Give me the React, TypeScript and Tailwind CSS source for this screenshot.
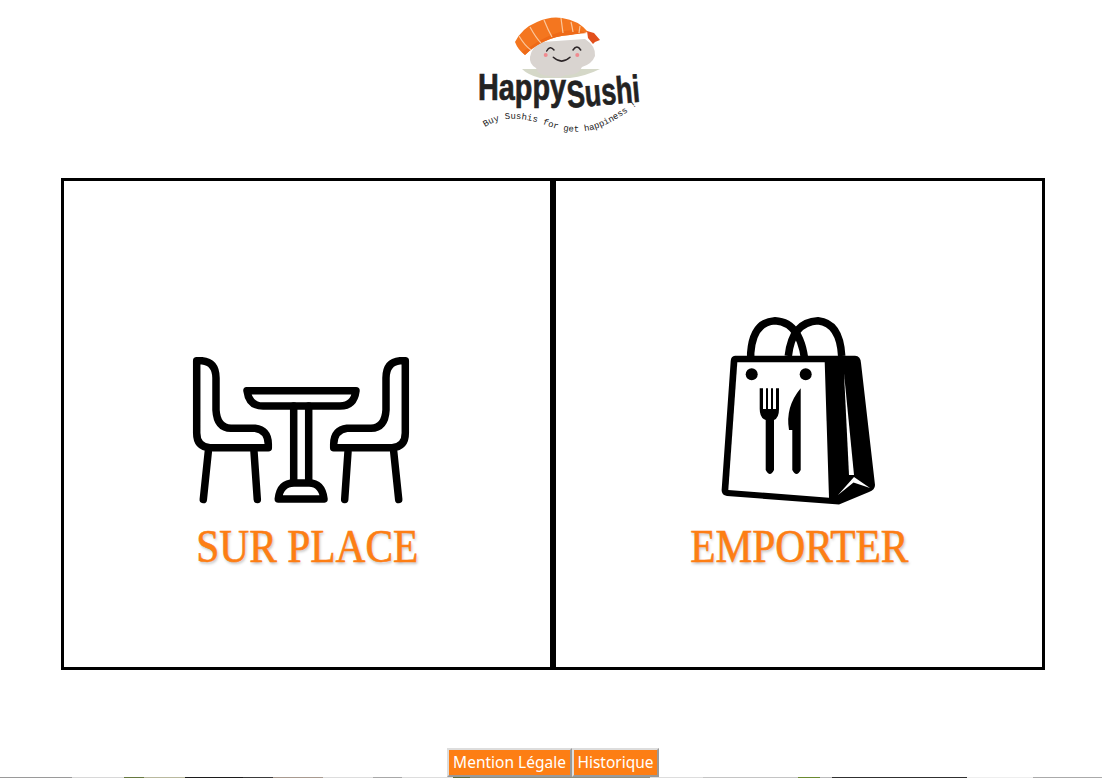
import type { ReactNode } from "react";

// logo: the sushi is drawn, the wordmark stays real text
function Logo() {
  return (
    <svg width="180" height="140" viewBox="0 0 180 140">
      <path d="M52 69 L130 69 Q116 76 100 78 L70 78 Q58 75 52 69Z" fill="#d5d8c8" />
      <path d="M60 57 Q62 46 72 42 L115 39 Q126 46 125 56 Q122 64 112 67 Q108 76 96 75 Q88 79 80 76 Q68 76 66 68 Q59 64 60 57Z" fill="#d9d4d0" />
      <path d="M45 42 Q52 28 67 22 Q80 16 92 18 Q108 20 118 32 Q108 33 100 35 Q85 36 73 42 Q63 47 55 55 Q48 50 45 42Z" fill="#f4761f" />
      <path d="M60 47 Q73 37 90 32 Q105 28 117 33 Q106 34 100 35 Q85 36 73 42 Q63 47 55 55 L52 52Z" fill="#ee6a18" />
      <path d="M117 31 L124 33 L130 40 L125 42 L123 44 L118 38Z" fill="#e2501c" />
      <g stroke="#fbc79c" strokeWidth="1.2" fill="none">
        <path d="M49 36 Q55 46 61 50" />
        <path d="M60 27 Q66 38 71 43" />
        <path d="M74 20 Q78 30 82 37" />
        <path d="M91 18 Q92 26 93 33" />
        <path d="M101 22 Q102 26 103 32" />
        <path d="M110 26 L109 33" />
      </g>
      <g stroke="#2b2426" strokeWidth="1.5" fill="none" strokeLinecap="round">
        <path d="M76.7 51 Q80 45 84 50" />
        <path d="M103 50 Q107 44 110.7 50" />
        <path d="M83.3 57.3 Q91.7 65 100 57.3" />
      </g>
      <circle cx="75.7" cy="55" r="2" fill="#f08a8f" />
      <circle cx="107.3" cy="55" r="2" fill="#f08a8f" />
      <text x="8" y="100" fontFamily="Liberation Sans, sans-serif" fontWeight="700" fontSize="36" fill="#222" stroke="#222" strokeWidth="0.7" textLength="88" lengthAdjust="spacingAndGlyphs">Happy</text>
      <text x="98" y="108" fontFamily="Liberation Sans, sans-serif" fontWeight="700" fontSize="38" fill="#222" stroke="#222" strokeWidth="0.7" textLength="73" lengthAdjust="spacingAndGlyphs" transform="rotate(-5 98 108)">Sushi</text>
      <path id="tagline" d="M15 127 C30 117 50 116 75 125 C95 133 115 135 135 125 C148 119 160 111 178 96" fill="none" />
      <text fontFamily="Liberation Mono, monospace" fontSize="9" fill="#222">
        <textPath href="#tagline">Buy Sushis for get happiness !</textPath>
      </text>
    </svg>
  );
}

function Chair() {
  return (
    <>
      <path d="M6.7 12.7 L12 12.7 Q26 14 26 30 L26 62 Q27 80 41 80.3 L65 80.3 Q78 82 78.3 96 L78.3 99.7 L20 99.7 Q6.7 99 6.7 85Z" />
      <path d="M18.3 103.7 L13.3 151.5" />
      <path d="M64 103.7 L67.3 151.5" />
    </>
  );
}

function TableIcon() {
  return (
    <svg className="mb-[6px] mr-[12px]" width="222" height="158" viewBox="0 0 222 158" fill="none" stroke="#000" strokeWidth="7.5" strokeLinecap="round" strokeLinejoin="round">
      <Chair />
      <g transform="translate(222 0) scale(-1 1)">
        <Chair />
      </g>
      <path d="M57 42.7 L166 42.7 Q164 58 150 58 L73 58 Q59 58 57 42.7Z" />
      <path d="M103.7 58 L103.7 134 M118.7 58 L118.7 134" />
      <path d="M88.3 151 Q90 135 104 135 L119 135 Q132 135 134 151Z" />
    </svg>
  );
}

function BagIcon() {
  return (
    <svg width="160" height="197" viewBox="0 0 160 197" fill="none">
      <g stroke="#000" strokeWidth="7.5" fill="none">
        <path d="M31.7 55 L31.7 38 Q34 7 56 5.7 Q84 7 86.7 55" />
        <path d="M69.3 41 Q73 7 99 5.7 Q121 8 122.7 41" />
      </g>
      <path d="M16 40.7 L136 40.7 Q141.7 41 142 48 L156 170 Q156 175 150 177 L120 189.5 L8 181 Q2 180 2.7 174 L11.7 46 Q12 41 16 40.7Z" fill="#000" />
      <path d="M18.3 47.3 L105.7 47.3 L110 182.7 L9.3 175Z" fill="#fff" />
      <circle cx="32.7" cy="59.3" r="6" fill="#000" />
      <circle cx="86.7" cy="59.3" r="6" fill="#000" />
      <path d="M125 58.3 L135 160 L130 160Z" fill="#fff" />
      <path d="M135 162 L119 180 L134.5 167.5 L151 173Z" fill="#fff" />
      <path d="M40.7 73.3 L44 73.3 L44 94 L47 94 L47 73.3 L49 73.3 L49 94 L52 94 L52 73.3 L54 73.3 L54 94 L57 94 L57 73.3 L60 73.3 L60 94 Q60 103 55 105 L55 155 Q51 163 46.7 155 L46.7 105 Q40.7 103 40.7 94Z" fill="#000" />
      <path d="M81.7 73.3 L81.7 155 Q77.5 163 73.3 155 L73.3 115 L70 115 Q66 92 81.7 73.3Z" fill="#000" />
    </svg>
  );
}

function Choice({ label, icon }: { label: string; icon: ReactNode }) {
  return (
    <button className="flex h-[492px] w-[492px] flex-col items-center justify-end border-[3px] border-black bg-white pb-[95px]">
      {icon}
      <span className="mt-[10px] scale-x-90 whitespace-nowrap font-['Liberation_Serif',serif] text-[46px] leading-[50px] text-[#fd7e14] [-webkit-text-stroke:0.6px_#fd7e14] [text-shadow:1px_2px_3px_rgba(0,0,0,0.25)]">
        {label}
      </span>
    </button>
  );
}

// the top row of a background picture just shows under the fold
const strip = [
  { w: 72, c: "#9a9a9a" },
  { w: 52, c: "#d8d8d8" },
  { w: 20, c: "#66783f" },
  { w: 41, c: "#b9b99e" },
  { w: 58, c: "#1c1c1c" },
  { w: 30, c: "#3a3a3a" },
  { w: 50, c: "#a89a90" },
  { w: 50, c: "#dddddd" },
  { w: 29, c: "#a8a8a8" },
  { w: 51, c: "#dddddd" },
  { w: 17, c: "#5a6b3c" },
  { w: 180, c: "#8d8d7d" },
  { w: 53, c: "#dddddd" },
  { w: 95, c: "#c4c4c4" },
  { w: 22, c: "#6b8a30" },
  { w: 12, c: "#bbbbbb" },
  { w: 135, c: "#303030" },
  { w: 66, c: "#eeeeee" },
  { w: 69, c: "#aaaaaa" },
];

export default function App() {
  return (
    <div className="h-[778px] overflow-hidden bg-white">
      <header className="flex justify-center pl-[18px]">
        <Logo />
      </header>
      <main className="mt-[38px] flex justify-center pl-[4px]">
        <Choice label="SUR PLACE" icon={<TableIcon />} />
        <Choice label="EMPORTER" icon={<BagIcon />} />
      </main>
      <footer className="mt-[78px] flex justify-center pl-[4px]">
        <button className="h-[29px] w-[125px] border-2 border-t-[#ddd] border-l-[#ddd] border-r-[#999] border-b-[#999] bg-[#fd7e14] font-['Noto_Sans',sans-serif] text-[15.5px] leading-[25px] text-white">Mention Légale</button>
        <button className="h-[29px] w-[87px] border-2 border-t-[#ddd] border-l-[#ddd] border-r-[#999] border-b-[#999] bg-[#fd7e14] font-['Noto_Sans',sans-serif] text-[15.5px] leading-[25px] text-white">Historique</button>
      </footer>
      <div className="flex h-px">
        {strip.map((s, i) => (
          <div key={i} style={{ width: s.w, backgroundColor: s.c }} />
        ))}
      </div>
    </div>
  );
}
